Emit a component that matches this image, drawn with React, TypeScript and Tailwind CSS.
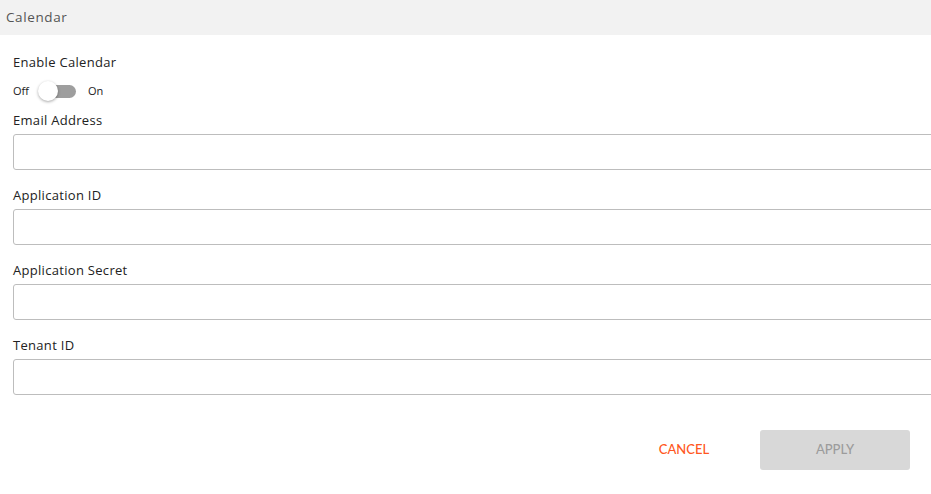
import { useState } from "react";

const fields = ["Email Address", "Application ID", "Application Secret", "Tenant ID"];

function Toggle({ on, onChange }: { on: boolean; onChange: () => void }) {
  return (
    <button type="button" onClick={onChange} className="relative ml-[9px] h-[20px] w-[38px]">
      <span className="absolute left-[4px] top-[3.5px] h-[13px] w-[34px] rounded-full bg-[#9e9e9e]" />
      <span
        className={
          "absolute top-0 h-[20px] w-[20px] rounded-full bg-white shadow-[0_1px_3px_rgba(0,0,0,0.35)] " +
          (on ? "left-[18px]" : "left-0")
        }
      />
    </button>
  );
}

export default function App() {
  const [enabled, setEnabled] = useState(false);

  return (
    <div className="h-[494px] w-[931px] overflow-hidden bg-white font-['Open_Sans',sans-serif] text-[13px] text-[#222]">
      <div className="flex h-[35px] items-center bg-[#f2f2f2] pl-[6px] text-[13.5px] tracking-[0.6px] text-[#555]">
        Calendar
      </div>

      <div className="pl-[13px] pt-[18px]">
        <div className="leading-[18px] tracking-[0.3px]">Enable Calendar</div>
        <div className="mt-[10px] flex h-[20px] items-center text-[11px]">
          <span>Off</span>
          <Toggle on={enabled} onChange={() => setEnabled(!enabled)} />
          <span className="ml-[12px]">On</span>
        </div>

        <div className="mt-[10px] flex flex-col gap-[16px]">
          {fields.map((f) => (
            <div key={f}>
              <div className="leading-[18px] tracking-[0.3px]">{f}</div>
              <input
                type="text"
                className="mt-[5px] block h-[36px] w-[940px] rounded-[3px] border border-[#bdbdbd] px-2 outline-none"
              />
            </div>
          ))}
        </div>

        <div className="mt-[35px] flex justify-end pr-[21px] font-['Lato',sans-serif]">
          <button className="h-[40px] w-[150px] text-[13px] font-medium text-[#ff5722]">CANCEL</button>
          <button
            disabled
            className="ml-[1px] h-[40px] w-[150px] rounded-[3px] bg-[#d8d8d8] text-[13px] font-medium text-[#9c9c9c]"
          >
            APPLY
          </button>
        </div>
      </div>
    </div>
  );
}
